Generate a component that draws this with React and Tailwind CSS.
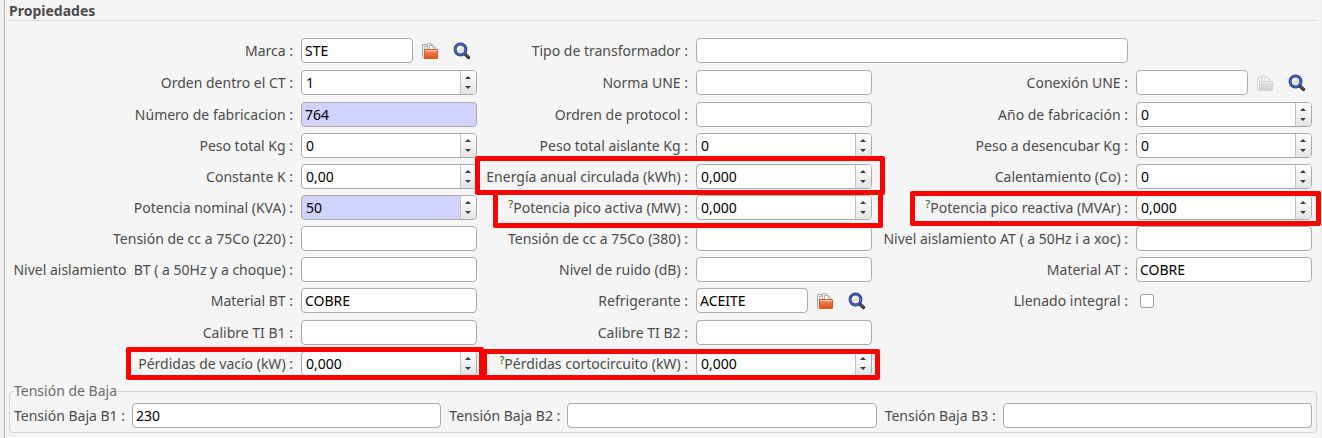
import React, { useId, useState } from "react";

const BOX =
  "h-[25px] w-full min-w-0 rounded-[4px] border border-[#aeaaa5] text-[14px] text-black outline-none focus:border-[#f07746]";

function FolderIcon({ muted }) {
  const id = useId();
  return (
    <svg width="16" height="16" viewBox="0 0 16 16" opacity={muted ? 0.4 : 1} aria-hidden="true">
      <defs>
        <linearGradient id={id} x1="0" y1="0" x2="0" y2="1">
          <stop offset="0" stopColor={muted ? "#d0d0d0" : "#f6b08c"} />
          <stop offset="0.35" stopColor={muted ? "#b4b4b4" : "#ee7a4a"} />
          <stop offset="1" stopColor={muted ? "#a0a0a0" : "#e0521c"} />
        </linearGradient>
      </defs>
      <path d="M0.5 15V1.5H4.500V3H8V15z" fill="#ececea" stroke="#a9a9a7" />
      <path d="M2.500 14V3.500H5.500V0.500H9L11.500 3V8" fill="#f8f8f8" stroke="#b4b4b2" />
      <path d="M5.500 7V3.500M9 0.500V3h2.500" fill="none" stroke="#b4b4b2" />
      <path d="M7.500 7V2.500H11L13.500 5V7z" fill="#ffffff" stroke="#b0b0ae" />
      <path d="M11 2.500V5h2.500" fill="none" stroke="#b0b0ae" />
      <rect x="2.500" y="6.500" width="13" height="9" rx="0.500" fill={`url(#${id})`} stroke={muted ? "#a6a6a6" : "#cf5a2a"} />
      <path d="M3.500 7.500h11" stroke="#ffffff" strokeOpacity="0.450" />
    </svg>
  );
}

function SearchIcon() {
  return (
    <svg width="18" height="18" viewBox="0 0 18 18" aria-hidden="true">
      <path d="M11.800 11.800l3.800 3.700" stroke="#2b2b2b" strokeWidth="3.200" strokeLinecap="round" />
      <path d="M13 12.500l2.300 2.200" stroke="#85857c" strokeWidth="1" strokeLinecap="round" />
      <circle cx="7.500" cy="7.500" r="5.400" fill="#e3e3e1" stroke="#203a8c" strokeWidth="3" />
      <circle cx="7.500" cy="7.500" r="5.500" fill="none" stroke="#5f80cf" strokeWidth="1" />
      <path d="M4.900 7.800a2.800 2.800 0 0 1 2.900-3" fill="none" stroke="#ffffff" strokeWidth="1.500" />
    </svg>
  );
}

function TextField({ id, initial = "", required }) {
  const [value, setValue] = useState(initial);
  return (
    <input
      id={id}
      type="text"
      value={value}
      onChange={(e) => setValue(e.target.value)}
      className={`${BOX} px-[3px] ${required ? "bg-[#d2d2ff]" : "bg-white"}`}
    />
  );
}

function SpinField({ id, label, initial, required }) {
  const [value, setValue] = useState(initial);
  const step = (delta) => {
    const decimals = (value.split(",")[1] || "").length;
    const next = (parseFloat(value.replace(",", ".")) || 0) + delta;
    setValue(next.toFixed(decimals).replace(".", ","));
  };
  return (
    <div className={`${BOX} flex overflow-hidden ${required ? "bg-[#d2d2ff]" : "bg-white"}`}>
      <input
        id={id}
        type="text"
        inputMode="decimal"
        value={value}
        onChange={(e) => setValue(e.target.value)}
        className="min-w-0 flex-1 bg-transparent px-1 outline-none"
      />
      <div className="flex w-4 flex-col border-l border-[#c4c1bd] bg-linear-to-b from-white to-[#e4e4e4] pr-px">
        <button
          type="button"
          aria-label={`Aumentar ${label}`}
          onClick={() => step(1)}
          className="flex flex-1 items-end justify-center pb-1"
        >
          <svg width="6" height="3" viewBox="0 0 6 3">
            <path d="M3 0L6 3H0z" fill="#3c3c3c" />
          </svg>
        </button>
        <button
          type="button"
          aria-label={`Disminuir ${label}`}
          onClick={() => step(-1)}
          className="flex flex-1 items-start justify-center pt-[3px]"
        >
          <svg width="6" height="3" viewBox="0 0 6 3">
            <path d="M3 3L6 0H0z" fill="#3c3c3c" />
          </svg>
        </button>
      </div>
    </div>
  );
}

function LookupField({ id, label, initial, empty }) {
  return (
    <div className="flex h-[26px] items-start">
      <div className="min-w-0 flex-1">
        <TextField id={id} initial={initial} />
      </div>
      <button type="button" aria-label={`Abrir ${label}`} disabled={empty} className="flex h-[25px] w-8 items-center justify-center pl-[2px]">
        <FolderIcon muted={empty} />
      </button>
      <button type="button" aria-label={`Buscar ${label}`} className="flex h-[25px] w-8 items-center justify-center pl-[2px]">
        <SearchIcon />
      </button>
    </div>
  );
}

function CheckField({ id }) {
  return (
    <div className="flex h-[25px] items-center pl-1">
      <input
        id={id}
        type="checkbox"
        className="size-[14px] appearance-none rounded-[3px] border border-[#a09c98] bg-white checked:bg-[#f07746]"
      />
    </div>
  );
}

const FIELDS = [
  { label: "Marca", kind: "lookup", value: "STE" },
  { label: "Tipo de transformador", kind: "text", wide: true },
  { label: "Orden dentro el CT", kind: "spin", value: "1" },
  { label: "Norma UNE", kind: "text" },
  { label: "Conexión UNE", kind: "lookup", empty: true },
  { label: "Número de fabricacion", kind: "text", value: "764", required: true },
  { label: "Ordren de protocol", kind: "text" },
  { label: "Año de fabricación", kind: "spin", value: "0" },
  { label: "Peso total Kg", kind: "spin", value: "0" },
  { label: "Peso total aislante Kg", kind: "spin", value: "0" },
  { label: "Peso a desencubar Kg", kind: "spin", value: "0" },
  { label: "Constante K", kind: "spin", value: "0,00" },
  { label: "Energía anual circulada (kWh)", kind: "spin", value: "0,000", mark: "-top-2 -right-[13px] -bottom-[6px] -left-[10px]" },
  { label: "Calentamiento (Co)", kind: "spin", value: "0" },
  { label: "Potencia nominal (KVA)", kind: "spin", value: "50", required: true },
  { label: "Potencia pico activa (MW)", kind: "spin", value: "0,000", help: true, mark: "-top-[5px] -right-[11px] -bottom-2 left-2" },
  { label: "Potencia pico reactiva (MVAr)", kind: "spin", value: "0,000", help: true, mark: "-top-1 -right-[9px] -bottom-[6px] left-[30px]" },
  { label: "Tensión de cc a 75Co (220)", kind: "text" },
  { label: "Tensión de cc a 75Co (380)", kind: "text" },
  { label: "Nivel aislamiento AT ( a 50Hz i a xoc)", kind: "text" },
  { label: "Nivel aislamiento  BT ( a 50Hz y a choque)", kind: "text" },
  { label: "Nivel de ruido (dB)", kind: "text" },
  { label: "Material AT", kind: "text", value: "COBRE" },
  { label: "Material BT", kind: "text", value: "COBRE" },
  { label: "Refrigerante", kind: "lookup", value: "ACEITE" },
  { label: "Llenado integral", kind: "check" },
  { label: "Calibre TI B1", kind: "text", startsRow: true },
  { label: "Calibre TI B2", kind: "text" },
  { label: "Pérdidas de vacío (kW)", kind: "spin", value: "0,000", startsRow: true, mark: "-top-1 -right-[7px] -bottom-1 left-28" },
  { label: "Pérdidas cortocircuito (kW)", kind: "spin", value: "0,000", help: true, mark: "-top-[2px] -right-2 -bottom-1 -left-[3px]" },
];

function Field({ field }) {
  const id = useId();
  const { label, kind, value, required, empty, help, mark, wide, startsRow } = field;
  return (
    <div
      className={`relative grid grid-cols-subgrid items-start ${wide ? "col-span-3" : "col-span-2"} ${startsRow ? "col-start-1" : ""}`}
    >
      <label htmlFor={id} className="flex h-[25px] items-center justify-end whitespace-pre">
        {help && <span className="self-start text-[11px] leading-[18px] font-medium text-[#1c7c1c]">?</span>}
        {label} :
      </label>
      <div className={wide ? "col-span-2" : ""}>
        {kind === "text" && <TextField id={id} initial={value} required={required} />}
        {kind === "spin" && <SpinField id={id} label={label} initial={value} required={required} />}
        {kind === "lookup" && <LookupField id={id} label={label} initial={value} empty={empty} />}
        {kind === "check" && <CheckField id={id} />}
      </div>
      {mark && <div className={`pointer-events-none absolute z-10 rounded-[2px] border-5 border-[#ff0000] ${mark}`} />}
    </div>
  );
}

function VoltageField({ label, initial }) {
  const id = useId();
  return (
    <div className="flex items-center gap-2">
      <label htmlFor={id} className="w-[110px] shrink-0 whitespace-nowrap text-right">
        {label} :
      </label>
      <TextField id={id} initial={initial} />
    </div>
  );
}

export default function App() {
  return (
    <div className="min-h-screen overflow-hidden bg-[#f0f0f0] pl-1 font-['Noto_Sans',sans-serif] text-[14px] leading-5 text-[#4c4c4c]">
      <main className="min-h-screen border-r border-l border-r-[#ebebeb] border-l-[#b9b5b1] bg-[#f5f5f5] pr-1 pl-1">
        <h1 className="border-b border-[#d9d9d9] pt-[2px] leading-[18px] font-bold">Propiedades</h1>
        <div className="mt-[17px] mr-[5px] ml-[5px] grid grid-cols-[279px_minmax(0,1fr)_203px_minmax(0,1fr)_248px_minmax(0,1fr)] gap-x-2 gap-y-[6px]">
          {FIELDS.map((field) => (
            <Field key={field.label} field={field} />
          ))}
        </div>
        <fieldset className="mt-[5px] rounded-[4px] border border-[#d4d4d4] px-1 pt-[2px] pb-1">
          <legend className="leading-5 text-[#6c6c6c]">Tensión de Baja</legend>
          <div className="grid grid-cols-3 gap-2">
            <VoltageField label="Tensión Baja B1" initial="230" />
            <VoltageField label="Tensión Baja B2" />
            <VoltageField label="Tensión Baja B3" />
          </div>
        </fieldset>
      </main>
    </div>
  );
}
